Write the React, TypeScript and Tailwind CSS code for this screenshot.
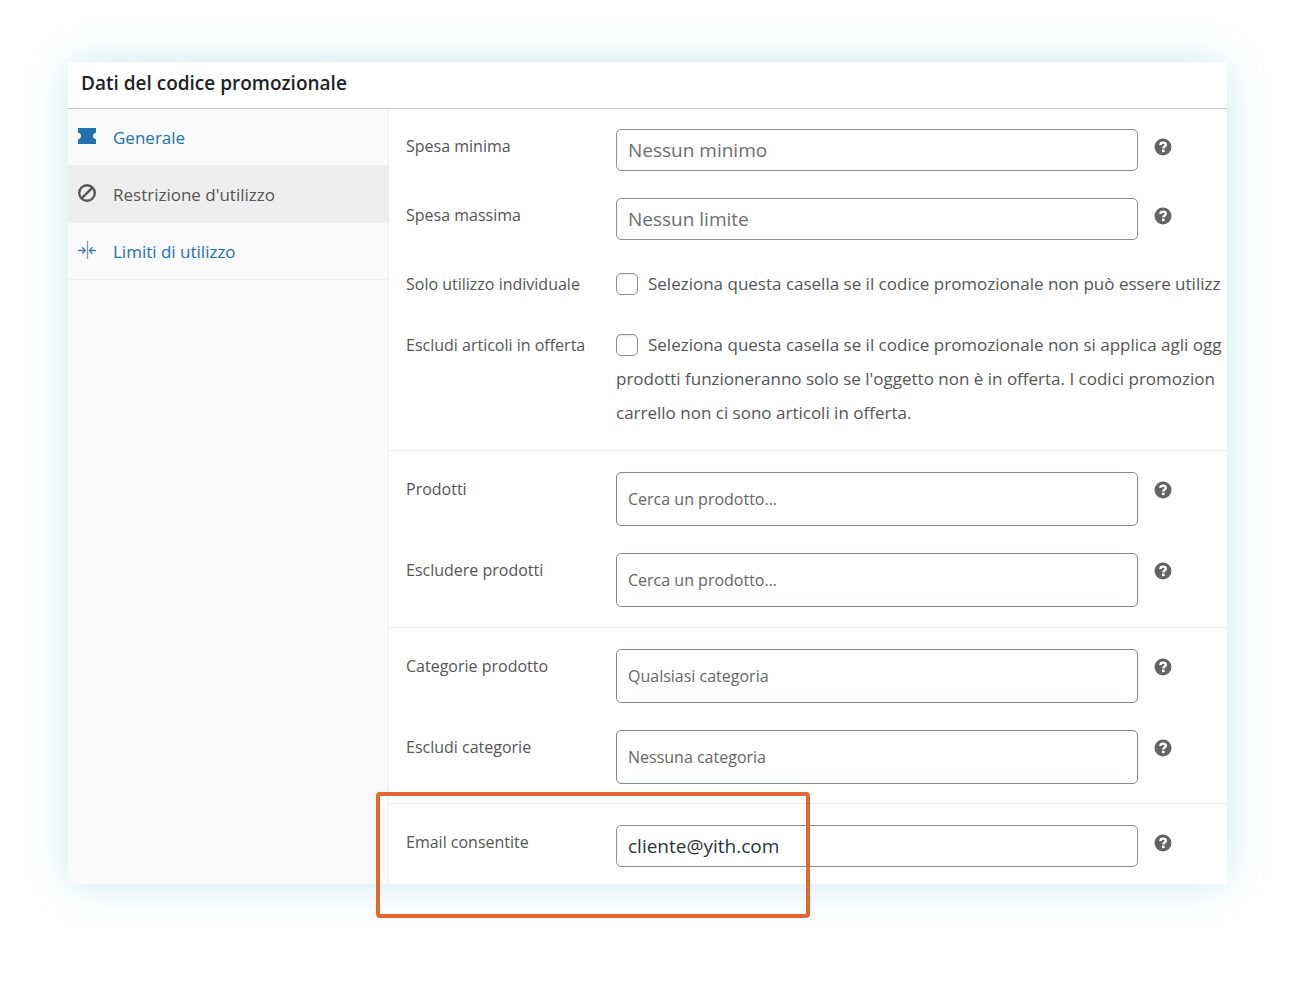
import React, { useState } from 'react';

interface HelpProps {
    label: string;
}

const HelpTip: React.FC<HelpProps> = ({ label }) => (
    <button type="button" aria-label={`Aiuto: ${label}`} className="flex h-9 w-[18px] shrink-0 items-center justify-center">
        <svg width="18" height="18" viewBox="0 0 18 18" aria-hidden="true">
            <circle cx="9" cy="9" r="8.5" fill="#646464" />
            <path d="M6.3 6.900c0-1.500 1.200-2.300 2.800-2.300s2.700.9 2.700 2.200c0 1.700-2.500 1.800-2.500 3.700" fill="none" stroke="#fff" strokeWidth="2.400" />
            <rect x="8" y="11.700" width="2.600" height="2.400" fill="#fff" />
        </svg>
    </button>
);

interface FieldProps {
    id: string;
    label: string;
    placeholder?: string;
    value?: string;
    type?: string;
    tall?: boolean;
}

const TextField: React.FC<FieldProps> = ({ id, label, placeholder, value, type, tall }) => {
    const [text, setText] = useState(value || '');

    return (
        <div className="flex items-start">
            <label htmlFor={id} className="w-[210px] shrink-0 text-base leading-[34px]">{label}</label>
            <input
                id={id}
                type={type || 'text'}
                value={text}
                placeholder={placeholder}
                onChange={(e) => setText(e.target.value)}
                className={
                    tall
                        ? 'h-[54px] w-[522px] min-w-0 rounded-[5px] border border-[#7e8993] bg-white px-[11px] text-base placeholder:text-[#666]'
                        : 'h-[42px] w-[522px] min-w-0 rounded-[5px] border border-[#8c8f94] bg-white px-[11px] text-[19px] text-[#2c3338] placeholder:text-[#6b6e72]'
                }
            />
            <div className="ml-4">
                <HelpTip label={label} />
            </div>
        </div>
    );
};

interface CheckProps {
    id: string;
    label: string;
    lines: string[];
}

const CheckField: React.FC<CheckProps> = ({ id, label, lines }) => (
    <div className="flex items-start">
        <label htmlFor={id} className="w-[210px] shrink-0 text-base leading-[34px]">{label}</label>
        <div className="text-[17px] leading-[34px] whitespace-nowrap">
            <div className="flex items-center gap-[10px]">
                <input
                    id={id}
                    type="checkbox"
                    aria-describedby={`${id}_desc`}
                    className="size-[22px] shrink-0 appearance-none rounded-[5px] border border-[#8c8f94] bg-white shadow-[inset_0_1px_2px_rgba(0,0,0,0.1)] checked:bg-[#2271b1]"
                />
                <span id={`${id}_desc`}>{lines[0]}</span>
            </div>
            {lines.slice(1).map((line) => (
                <p key={line}>{line}</p>
            ))}
        </div>
    </div>
);

const TicketIcon = () => (
    <svg width="18" height="16" viewBox="0 0 18 16" aria-hidden="true">
        <path d="M0 0h18v4.800q-3 .6-3 3.200t3 3.200V16H0v-4.800q3-.6 3-3.200T0 4.800z" fill="#2271b1" />
    </svg>
);

const ForbiddenIcon = () => (
    <svg width="18" height="18" viewBox="0 0 18 18" fill="none" stroke="#555" strokeWidth="2.4" aria-hidden="true">
        <circle cx="9" cy="9" r="7.8" />
        <path d="M3.800 14.200 14.200 3.800" />
    </svg>
);

const LimitIcon = () => (
    <svg width="18" height="18" viewBox="0 0 18 18" fill="none" stroke="#3f7fb8" strokeWidth="1.300" aria-hidden="true">
        <path d="M9.500 0v18" stroke="#8d93b4" />
        <path d="M0 9.500h7M4.200 6.300 7.300 9.500l-3.100 3.200" />
        <path d="M18 9.500h-6.500M14.500 6.300 11.400 9.500l3.100 3.200" />
    </svg>
);

const tabs = [
    { name: 'Generale', icon: <TicketIcon />, active: false },
    { name: "Restrizione d'utilizzo", icon: <ForbiddenIcon />, active: true },
    { name: 'Limiti di utilizzo', icon: <LimitIcon />, active: false },
];

const App: React.FC = () => {
    return (
        <div className="bg-white pt-[62px] pr-[73px] pb-[102px] pl-[68px] font-['Open_Sans',sans-serif] text-[#555]">
            <main className="bg-white shadow-[0_0_40px_rgba(0,150,170,0.2)]">
                <h2 className="border-b border-[#c3c4c7] px-[13px] pt-[5px] pb-[9px] text-[19px] leading-8 font-semibold text-[#1d2327]">
                    Dati del codice promozionale
                </h2>
                <div className="flex">
                    <nav className="w-[321px] shrink-0 border-r border-[#eee] bg-[#fafafa]">
                        <ul>
                            {tabs.map((tab) => (
                                <li key={tab.name}>
                                    <a
                                        href="#"
                                        className={
                                            tab.active
                                                ? 'flex h-[57px] items-center border-b border-[#eee] bg-[#eee] px-[10px] pt-0.5 text-[17px] text-[#555]'
                                                : 'flex h-[57px] items-center border-b border-[#eee] px-[10px] pt-0.5 text-[17px] text-[#2271b1]'
                                        }
                                    >
                                        <span className="mr-[17px] pb-[5px]">{tab.icon}</span>
                                        {tab.name}
                                    </a>
                                </li>
                            ))}
                        </ul>
                    </nav>
                    <form className="min-w-0 flex-1">
                        <div className="flex flex-col gap-[27px] overflow-hidden border-b border-[#eee] pt-5 pb-5 pl-[17px]">
                            <TextField id="minimum_amount" label="Spesa minima" placeholder="Nessun minimo" />
                            <TextField id="maximum_amount" label="Spesa massima" placeholder="Nessun limite" />
                            <CheckField
                                id="individual_use"
                                label="Solo utilizzo individuale"
                                lines={['Seleziona questa casella se il codice promozionale non può essere utilizz']}
                            />
                            <CheckField
                                id="exclude_sale_items"
                                label="Escludi articoli in offerta"
                                lines={[
                                    'Seleziona questa casella se il codice promozionale non si applica agli ogg',
                                    "prodotti funzioneranno solo se l'oggetto non è in offerta. I codici promozion",
                                    'carrello non ci sono articoli in offerta.',
                                ]}
                            />
                        </div>
                        <div className="flex flex-col gap-[27px] border-b border-[#eee] pt-[21px] pb-5 pl-[17px]">
                            <TextField id="product_ids" label="Prodotti" placeholder="Cerca un prodotto…" tall />
                            <TextField id="exclude_product_ids" label="Escludere prodotti" placeholder="Cerca un prodotto…" tall />
                        </div>
                        <div className="flex flex-col gap-[27px] border-b border-[#eee] pt-[21px] pb-[19px] pl-[17px]">
                            <TextField id="product_categories" label="Categorie prodotto" placeholder="Qualsiasi categoria" tall />
                            <TextField id="exclude_categories" label="Escludi categorie" placeholder="Nessuna categoria" tall />
                        </div>
                        <div className="relative pt-[21px] pb-[17px] pl-[17px]">
                            <TextField id="customer_email" label="Email consentite" type="email" value="cliente@yith.com" />
                            <div className="pointer-events-none absolute -top-3 -left-[13px] h-[126px] w-[434px] rounded border-4 border-[#e2662d]" />
                        </div>
                    </form>
                </div>
            </main>
        </div>
    );
};

export default App;
